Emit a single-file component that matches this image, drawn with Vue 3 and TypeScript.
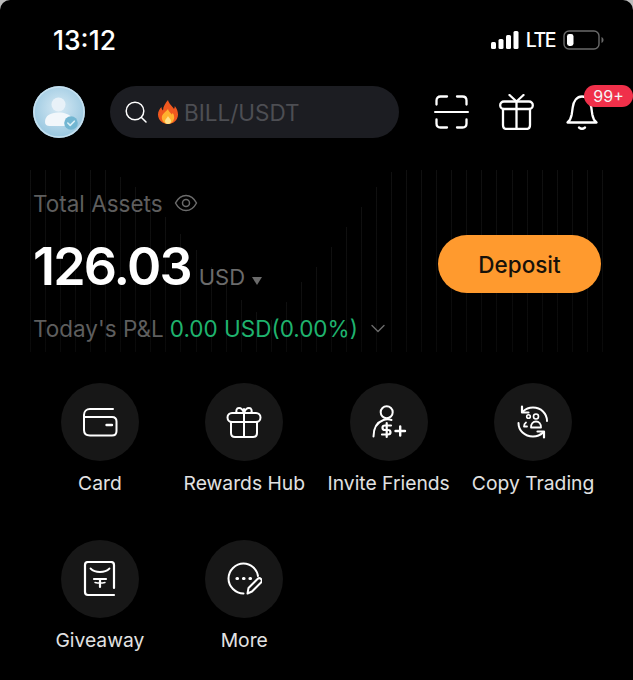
<script setup lang="ts">
interface Action {
  label: string
  icon: string
}

const actions: Action[] = [
  { label: 'Card', icon: 'card' },
  { label: 'Rewards Hub', icon: 'rewards' },
  { label: 'Invite Friends', icon: 'invite' },
  { label: 'Copy Trading', icon: 'copy' },
  { label: 'Giveaway', icon: 'giveaway' },
  { label: 'More', icon: 'more' }
]

// faint chart lines behind the balance, one height per line
const chartBars: number[] = [
  182, 182, 182, 182, 182, 182, 175, 165, 150, 135, 118, 102, 85, 68, 52, 40, 32, 50, 70, 85, 105, 125, 145, 165,
  180, 182, 182, 182, 182, 182, 182, 182, 182, 182, 182, 182, 182, 182, 182
]
</script>

<template>
  <div class="screen">
    <div class="status">
      <span class="time">13:12</span>
      <div class="status__right">
        <svg class="signal" width="28" height="18" viewBox="0 0 28 18" fill="#fff">
          <rect x="0" y="11" width="5" height="7" rx="1.5" />
          <rect x="7.5" y="8" width="5" height="10" rx="1.5" />
          <rect x="15" y="4" width="5" height="14" rx="1.5" />
          <rect x="22.5" y="0" width="5" height="18" rx="1.5" />
        </svg>
        <span class="lte">LTE</span>
        <svg class="battery" width="41" height="20" viewBox="0 0 41 20">
          <rect x="1" y="1" width="35" height="18" rx="5" fill="none" stroke="#6a6a6a" stroke-width="1.4" />
          <rect x="4" y="4" width="6.5" height="12" rx="2.4" fill="#fff" />
          <path d="M38.500 7v6c1.200-.5 2-1.600 2-3s-.8-2.500-2-3z" fill="#6a6a6a" />
        </svg>
      </div>
    </div>

    <header class="top">
      <div class="avatar">
        <svg width="52" height="52" viewBox="0 0 52 52">
          <defs>
            <radialGradient id="avatarBg" cx="50%" cy="42%" r="62%">
              <stop offset="0" stop-color="#d6e9f4" />
              <stop offset="1" stop-color="#93c4de" />
            </radialGradient>
          </defs>
          <circle cx="26" cy="26" r="26" fill="url(#avatarBg)" />
          <circle cx="26" cy="26" r="25" fill="none" stroke="#c6e0ef" stroke-width="1.500" />
          <circle cx="25.500" cy="18.500" r="7" fill="#e8f1f8" />
          <path d="M12 36c0-6 5-9.500 13.500-9.500 6 0 11 2 13.500 5v8.500H16.500c-2.800 0-4.500-1.500-4.500-4z" fill="#f2f7fb" />
          <circle cx="38" cy="37" r="6.800" fill="#72b6d2" />
          <path d="M34.800 37l2.400 2.400 4.100-4.200" fill="none" stroke="#d9f0f7" stroke-width="1.600" stroke-linecap="round" stroke-linejoin="round" />
        </svg>
      </div>
      <div class="search">
        <svg width="22" height="22" viewBox="0 0 22 22" fill="none" stroke="#fff" stroke-width="1.500" stroke-linecap="round">
          <circle cx="10" cy="10" r="8.800" />
          <path d="M16.500 16.500l4.500 4.500" />
        </svg>
        <svg class="flame" width="20" height="24" viewBox="0 0 20 24">
          <path d="M10 0c1 4 4 5.500 6 9 .6-1 .8-2 .8-3 2 2.500 3.200 5.500 3.200 8.500C20 20 15.500 24 10 24S0 20 0 14.500C0 11.500 1.500 9 3.500 7c0 1.500.5 2.700 1.500 3.500C5 6.500 7.500 3 10 0z" fill="#f0581f" />
          <path d="M10 9c.5 2.500 2.500 3.500 3.800 5.500.5-.5.700-1 .9-1.700 1 1.500 1.500 3 1.500 4.500 0 3.700-2.800 6.700-6.200 6.700s-6.200-3-6.200-6.500c0-3.500 3.500-5 6.200-8.500z" fill="#ffb02e" />
          <path d="M10 16c.3 1.500 3 2.500 3 5 0 1.700-1.300 3-3 3s-3-1.300-3-3c0-2 2.500-3 3-5z" fill="#ffe08a" />
        </svg>
        <span class="search__text">BILL/USDT</span>
      </div>
      <div class="top__icons">
        <svg width="35" height="34" viewBox="0 0 35 34" fill="none" stroke="#fff" stroke-width="2.300" stroke-linecap="round" stroke-linejoin="round">
          <path d="M2.500 9.500V5.500C2.500 3 4 1.500 6.500 1.500H13M23 1.500h5.500c2.500 0 4 1.500 4 4v4" />
          <path d="M1 17h33" stroke-width="2" />
          <path d="M2.500 24.500v4c0 2.500 1.500 4 4 4H13M23 32.500h5.500c2.500 0 4-1.500 4-4v-4" />
        </svg>
        <svg class="icon-gift" width="35" height="36" viewBox="0 0 35 36" fill="none" stroke="#fff" stroke-width="2.300" stroke-linecap="round" stroke-linejoin="round">
          <path d="M10.500 1l7 6.500 7-6.500" />
          <rect x="1.200" y="7.500" width="32.600" height="7.500" rx="3.750" />
          <path d="M4 15v16c0 2.500 1.500 4 4 4h19c2.500 0 4-1.500 4-4V15M17.500 7.500V35" />
        </svg>
        <div class="bell">
          <svg width="32" height="36" viewBox="0 0 32 36" fill="none" stroke="#fff" stroke-width="2.300" stroke-linecap="round" stroke-linejoin="round">
            <path d="M1.500 28.500c2.500-2 3.500-4 4.200-8l1-7C7.500 7 11 2.500 16 2.500s8.500 4.500 9.300 11l1 7c.7 4 1.700 6 4.200 8z" />
            <path d="M13 33.500c1.800 1.500 4.200 1.500 6 0" />
          </svg>
          <span class="badge">99+</span>
        </div>
      </div>
    </header>

    <section class="assets">
      <div class="chart" aria-hidden="true">
        <i v-for="(h, i) in chartBars" :key="i" :style="{ height: h + 'px' }" />
      </div>
      <div class="assets__label">
        <span>Total Assets</span>
        <svg width="24" height="18" viewBox="0 0 24 18" fill="none" stroke="#6b6b6b" stroke-width="1.500" stroke-linejoin="round">
          <path d="M1.500 9C4 4.300 7.500 1.500 12 1.500S20 4.300 22.500 9C20 13.700 16.500 16.500 12 16.500S4 13.700 1.500 9z" />
          <circle cx="12" cy="9" r="3.500" />
        </svg>
      </div>
      <div class="assets__main">
        <div class="balance">
          <span class="balance__value">126.03</span>
          <span class="balance__unit">USD</span>
          <span class="balance__caret" />
        </div>
        <button class="deposit" type="button">Deposit</button>
      </div>
      <div class="pnl">
        <span class="pnl__label">Today's P&amp;L</span>
        <span class="pnl__value">0.00 USD(0.00%)</span>
        <svg width="14" height="9" viewBox="0 0 14 9" fill="none" stroke="#6b6b6b" stroke-width="1.400" stroke-linecap="round" stroke-linejoin="round">
          <path d="M1 1.500L7 7.500l6-6" />
        </svg>
      </div>
    </section>

    <section class="actions">
      <div v-for="a in actions" :key="a.label" class="action">
        <div class="action__icon">
          <svg width="36" height="36" viewBox="0 0 36 36" fill="none" stroke="#fff" stroke-width="2" stroke-linecap="round" stroke-linejoin="round">
            <template v-if="a.icon === 'card'">
              <path d="M31 5H8C4.500 5 2 7.500 2 11v15c0 3.500 2.500 5.500 6 5.500h22c3 0 4.500-2 4.500-4.500v-9.500C34.500 15 33 13 30 13H2.500" />
              <path d="M24.500 21h5.500" stroke-width="2.400" />
            </template>
            <template v-else-if="a.icon === 'rewards'">
              <path d="M11 9c-1.500-2-.5-5 2-5 2 0 4 2 5 5 1-3 3-5 5-5 2.500 0 3.500 3 2 5" />
              <rect x="1.500" y="9" width="33" height="9" rx="4.500" />
              <path d="M5 18v11c0 2.500 1.500 4 4 4h18c2.500 0 4-1.500 4-4V18M18 5v28" />
            </template>
            <template v-else-if="a.icon === 'invite'">
              <circle cx="15.700" cy="8.300" r="6" />
              <path d="M2.500 32.500c0-8 3-14 10-16.500 2.500-.8 5-1 8 0" />
              <path d="M20 21.500h-6c-1.500 0-2.500 1-2.500 2.200s1 2.300 2.500 2.300h3c1.500 0 2.500 1 2.500 2.300s-1 2.200-2.500 2.200h-6M15.700 19v14" stroke-width="2.200" />
              <path d="M24.500 27h9.500M29.200 22.500v9" stroke-width="2.400" />
            </template>
            <template v-else-if="a.icon === 'copy'">
              <path d="M32 17c0-7.500-6-13.500-14-13.500-4 0-7.500 1.500-10 4M3.500 19c0 7.500 6 13.500 14.500 13.500 4 0 7.500-1.500 10-4" />
              <path d="M7 2.500v6h6.500M29 33.500v-6h-6.500" stroke-width="2.200" />
              <circle cx="13.500" cy="12.500" r="1.800" stroke-width="1.600" />
              <circle cx="21" cy="12.500" r="2.500" stroke-width="1.600" />
              <path d="M16 23.500c0-3.500 2-6 5-6s5 2.500 5 6zM11 18.500c-1.500 1-2 2.500-2 4h3" stroke-width="1.800" />
            </template>
            <template v-else-if="a.icon === 'giveaway'">
              <path d="M32 27V4c0-2-1-3-3-3H6C4 1 3 2 3 4v27c0 2 1 3 3 3h26" stroke-width="2.200" />
              <path d="M8.500 7.500c2.500 2.500 5.500 3.500 9.500 3.500s7-1 9.500-3.500" stroke-width="1.800" />
              <path d="M12 18h12M18 18v8" stroke-width="2.200" />
              <path d="M13 21.500c3 .7 7 .7 10 0" stroke-width="1.500" />
            </template>
            <template v-else>
              <path d="M32 15C31 8.500 25 2.500 17.500 2.500 9.500 2.500 2.500 9.500 2.500 17.500S9.500 32.500 17.500 32.500" />
              <path d="M11 17.500h.5M17.500 17.500h.5M24 17.500h.5" stroke-width="3.200" />
              <path d="M21.500 32.500l1-5.500 9-9c1-1 2.500-1 3.500 0s1 2.500 0 3.500l-9 9z" />
            </template>
          </svg>
        </div>
        <span class="action__label">{{ a.label }}</span>
      </div>
    </section>
  </div>
</template>

<style>
html,
body {
  margin: 0;
  background: #bbb;
}
</style>

<style scoped>
.screen {
  width: 633px;
  height: 680px;
  background: #000;
  font-family: Inter, "Liberation Sans", sans-serif;
  color: #fff;
  overflow: hidden;
  border-radius: 10px 10px 0 0;
}

.status {
  display: flex;
  align-items: center;
  justify-content: space-between;
  height: 30px;
  padding: 25px 29px 0 53px;
}
.time {
  font-size: 26.500px;
  font-weight: 500;
}
.status__right {
  display: flex;
  align-items: center;
}
.lte {
  font-size: 19.5px;
  font-weight: 500;
  letter-spacing: -1.5px;
  margin: 0 8px 0 7px;
}

.top {
  display: flex;
  align-items: center;
  height: 52px;
  margin-top: 31px;
  padding: 0 24px 0 33px;
}
.avatar {
  width: 52px;
  height: 52px;
  flex: none;
}
.search {
  display: flex;
  align-items: center;
  width: 289px;
  height: 52px;
  margin-left: 25px;
  padding-left: 15px;
  box-sizing: border-box;
  border-radius: 26px;
  background: #1c1d22;
}
.flame {
  margin-left: 11px;
}
.search__text {
  margin-left: 6px;
  font-size: 22.500px;
  color: #4d4e53;
}
.top__icons {
  display: flex;
  align-items: center;
  margin-left: 35px;
  gap: 30px;
}
.bell {
  position: relative;
  width: 32px;
  height: 36px;
  margin-left: 2px;
}
.badge {
  position: absolute;
  top: -9px;
  left: 18px;
  width: 49px;
  height: 22px;
  border-radius: 11px;
  background: #f0304a;
  font-size: 16px;
  line-height: 22px;
  text-align: center;
  color: #f5f5f5;
}

.assets {
  position: relative;
  height: 171px;
  margin-top: 52px;
  padding: 0 32px 0 33px;
}
.chart {
  position: absolute;
  left: 30px;
  right: 30px;
  bottom: 9px;
  height: 182px;
  display: flex;
  align-items: flex-end;
  justify-content: space-between;
}
.chart i {
  display: block;
  width: 1px;
  background: linear-gradient(to top, #0a0a0a, #101010);
}
.assets__label,
.assets__main,
.pnl {
  position: relative;
}
.assets__label {
  display: flex;
  align-items: center;
  gap: 11px;
  height: 26px;
  font-size: 22.500px;
  color: #5e5e5e;
}
.assets__main {
  display: flex;
  align-items: center;
  justify-content: space-between;
  height: 58px;
  margin-top: 19px;
}
.balance {
  display: flex;
  align-items: baseline;
  padding-top: 4px;
}
.balance__value {
  font-size: 52px;
  font-weight: 600;
  letter-spacing: -1.800px;
}
.balance__unit {
  margin-left: 8px;
  font-size: 22px;
  color: #6b6b6b;
}
.balance__caret {
  width: 0;
  height: 0;
  margin-left: 7px;
  border: 5.500px solid transparent;
  border-top: 8px solid #6b6b6b;
  border-bottom: 0;
}
.deposit {
  width: 163px;
  height: 58px;
  border: 0;
  border-radius: 29px;
  background: #ff9a2e;
  font-family: inherit;
  font-size: 22.500px;
  font-weight: 500;
  color: #17120a;
}
.pnl {
  display: flex;
  align-items: center;
  height: 28px;
  margin-top: 21px;
  font-size: 22.500px;
}
.pnl__label {
  color: #5e5e5e;
}
.pnl__value {
  margin-left: 6px;
  color: #1fb36e;
}
.pnl svg {
  margin-left: 13px;
}

.actions {
  display: grid;
  grid-template-columns: repeat(4, 144.400px);
  grid-auto-rows: 157px;
  margin-top: 22px;
  padding-left: 27.700px;
}
.action {
  display: flex;
  flex-direction: column;
  align-items: center;
}
.action__icon {
  display: flex;
  align-items: center;
  justify-content: center;
  width: 78px;
  height: 78px;
  border-radius: 50%;
  background: #171717;
}
.action__label {
  margin-top: 10px;
  font-size: 19.300px;
  line-height: 24px;
  white-space: nowrap;
  color: #e2e2e2;
}
</style>
